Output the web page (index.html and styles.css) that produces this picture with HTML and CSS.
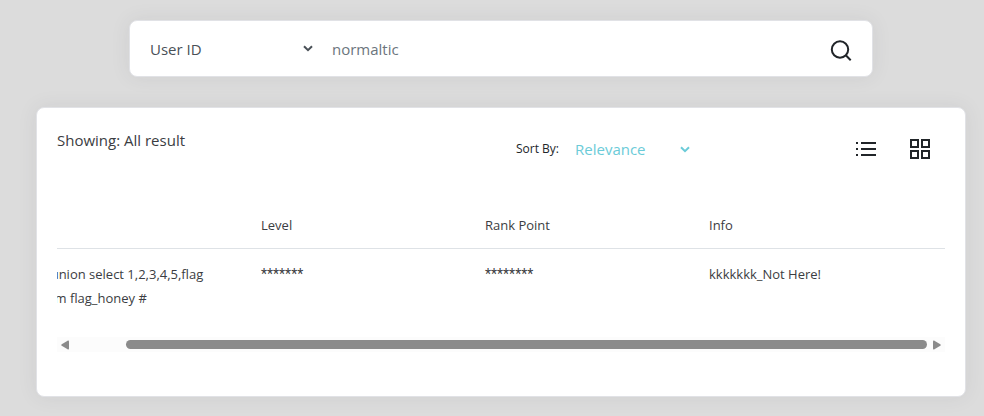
FILE: index.html
```html
<!DOCTYPE html>
<html lang="en">
<head>
    <meta charset="UTF-8">
    <meta name="viewport" content="width=device-width, initial-scale=1.0">
    <title>Search</title>
    <link rel="stylesheet" href="styles.css">
</head>
<body>
    <main class="container">
        <form class="search-form">
            <div class="select-wrap search-type">
                <select aria-label="Search type">
                    <option>User ID</option>
                </select>
                <svg class="chevron" width="10" height="7" viewBox="0 0 10 7"><path d="M1 1.2l4 4 4-4"/></svg>
            </div>
            <input class="search-input" type="text" placeholder="normaltic" aria-label="Keyword">
            <button class="search-btn" type="submit" aria-label="Search">
                <svg width="22" height="24" viewBox="0 0 22 24" fill="none" stroke="currentColor" stroke-width="2"><circle cx="10" cy="12.5" r="8.2"/><path d="M15.8 18.3l4.9 4.9"/></svg>
            </button>
        </form>

        <section class="card">
            <div class="result-header">
                <div class="records">Showing: All result</div>
                <div class="result-actions">
                    <div class="result-sorting">
                        <label for="sort">Sort By:</label>
                        <div class="select-wrap sort-select">
                            <select id="sort">
                                <option>Relevance</option>
                            </select>
                            <svg class="chevron" width="10" height="7" viewBox="0 0 10 7"><path d="M1 1.2l4 4 4-4"/></svg>
                        </div>
                    </div>
                    <div class="result-views">
                        <button type="button" aria-label="List view">
                            <svg width="24" height="24" viewBox="0 0 24 24" fill="none" stroke="currentColor" stroke-width="2"><path d="M7 6h15M7 12h15M7 18h15"/><path d="M2 6h2M2 12h2M2 18h2"/></svg>
                        </button>
                        <button type="button" aria-label="Grid view">
                            <svg width="24" height="24" viewBox="0 0 24 24" fill="none" stroke="currentColor" stroke-width="2"><path d="M3 3h7v7H3zM14 3h7v7h-7zM14 14h7v7h-7zM3 14h7v7H3z"/></svg>
                        </button>
                    </div>
                </div>
            </div>

            <!-- scrolled to the end -->
            <div class="table-scroll">
                <table class="result-table">
                    <thead>
                        <tr>
                            <th></th>
                            <th>Level</th>
                            <th>Rank Point</th>
                            <th class="info">Info</th>
                        </tr>
                    </thead>
                    <tbody>
                        <tr>
                            <td>1' union select 1,2,3,4,5,flag<br>from flag_honey #</td>
                            <td class="masked">*******</td>
                            <td class="masked">********</td>
                            <td>kkkkkkk_Not Here!</td>
                        </tr>
                    </tbody>
                </table>
            </div>
            <div class="scrollbar">
                <svg width="8" height="10" viewBox="0 0 8 10"><path d="M7 .5Q8 .2 8 1.5v7Q8 9.8 7 9.5L.7 5.8Q-.2 5 .7 4.2z"/></svg>
                <div class="scroll-track"><div class="scroll-thumb"></div></div>
                <svg width="8" height="10" viewBox="0 0 8 10"><path d="M1 .5Q0 .2 0 1.5v7Q0 9.8 1 9.5l6.3-3.7q.9-.8 0-1.6z"/></svg>
            </div>
        </section>
    </main>
</body>
</html>
```
FILE: styles.css
```css
* {
    box-sizing: border-box;
}

body {
    margin: 0;
    background: #dcdcdc;
    color: #3b3d42;
    font-family: "Open Sans", "Noto Sans", sans-serif;
    font-size: 15px;
    line-height: 24px;
}

button {
    display: flex;
    padding: 0;
    border: 0;
    background: none;
    color: #212529;
    cursor: pointer;
}

.container {
    padding: 20px 18px 19px 36px;
}

.search-form,
.card {
    background: #fff;
    border: 1px solid #e1e2e6;
    border-radius: 8px;
    box-shadow: 0 0 20px rgba(60, 65, 75, 0.08);
}

.search-form {
    display: flex;
    align-items: center;
    width: 80%;
    height: 57px;
    margin: 0 auto 30px;
    padding: 0 20px;
}

.select-wrap {
    display: grid;
    align-items: center;
}

.select-wrap select,
.select-wrap .chevron {
    grid-area: 1 / 1;
}

.select-wrap select {
    width: 100%;
    height: 40px;
    padding: 0;
    border: 0;
    outline: 0;
    background: none;
    color: inherit;
    font: inherit;
    appearance: none;
}

.chevron {
    justify-self: end;
    fill: none;
    stroke: currentColor;
    stroke-width: 2;
    pointer-events: none;
}

.search-type {
    width: 163px;
    color: #495057;
}

.search-input {
    flex: 1;
    min-width: 0;
    height: 40px;
    padding: 0 19px;
    border: 0;
    outline: 0;
    background: none;
    color: #495057;
    font: inherit;
}

.search-input::placeholder {
    color: #6c757d;
    opacity: 1;
}

.card {
    padding: 20px 20px 44px;
}

.result-header {
    display: flex;
    margin-bottom: 43px;
}

.records {
    flex: 1;
}

.result-actions {
    display: flex;
    justify-content: space-between;
    width: 429px;
    height: 42px;
    padding-right: 13px;
}

.result-sorting {
    display: flex;
    align-items: center;
    gap: 16px;
}

.result-sorting label {
    font-size: 12px;
    color: #212529;
}

.sort-select {
    width: 115px;
    color: #6bcbd8;
}

.result-views {
    display: flex;
    align-items: center;
    gap: 30px;
}

.table-scroll {
    display: flex;
    justify-content: flex-end;
    overflow: hidden;
}

.result-table {
    flex: none;
    width: calc(100% + 36px);
    border-collapse: collapse;
    table-layout: fixed;
    font-size: 13px;
}

.result-table th,
.result-table td {
    width: 224px;
    padding: 13px 16px 11px;
    font-weight: 400;
    text-align: left;
    vertical-align: top;
    white-space: nowrap;
}

.result-table th {
    padding-top: 0;
    border-bottom: 1px solid #dee2e6;
}

.result-table .info {
    width: auto;
}

.result-table .masked {
    font-family: Roboto, sans-serif;
    font-size: 14px;
}

.scrollbar {
    display: flex;
    align-items: center;
    justify-content: space-between;
    height: 15px;
    margin-top: 16px;
    padding: 0 4px;
    background: #fcfcfc;
    fill: #8b8b8b;
}

.scroll-track {
    flex: 1;
    margin: 0 6px 0 0;
}

.scroll-thumb {
    width: calc(100% - 57px);
    height: 9px;
    margin-left: auto;
    border-radius: 5px;
    background: #8b8b8b;
}
```
